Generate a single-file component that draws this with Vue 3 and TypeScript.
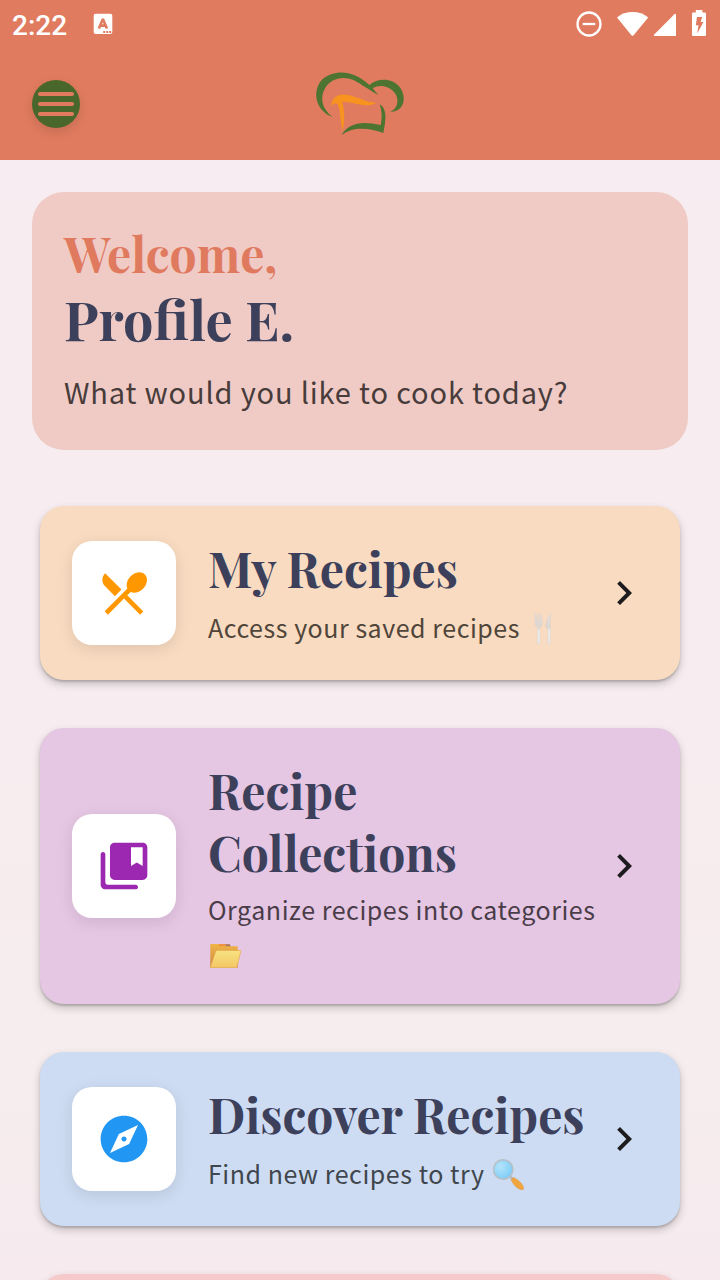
<script setup lang="ts">
interface RecipeCard {
  id: string
  title: string
  subtitle: string
  icon: string
}

const cards: RecipeCard[] = [
  {
    id: 'mine',
    title: 'My Recipes',
    subtitle: 'Access your saved recipes',
    icon: 'M8.1 13.34l2.83-2.83L3.91 3.5c-1.56 1.56-1.56 4.09 0 5.66l4.19 4.18zm6.78-1.81c1.53.71 3.68.21 5.27-1.38 1.91-1.91 2.28-4.65.81-6.12-1.46-1.46-4.2-1.1-6.12.81-1.59 1.59-2.09 3.74-1.38 5.27L3.7 19.87l1.41 1.41L12 14.41l6.88 6.88 1.41-1.41L13.41 13l1.47-1.47z',
  },
  {
    id: 'collections',
    title: 'Recipe Collections',
    subtitle: 'Organize recipes into categories',
    icon: 'M3 6c-.55 0-1 .45-1 1v13c0 1.1.9 2 2 2h13c.55 0 1-.45 1-1s-.45-1-1-1H5c-.55 0-1-.45-1-1V7c0-.55-.45-1-1-1zm17-4H8c-1.1 0-2 .9-2 2v12c0 1.1.9 2 2 2h12c1.1 0 2-.9 2-2V4c0-1.1-.9-2-2-2zm0 10l-2.5-1.5L15 12V4h5v8z',
  },
  {
    id: 'discover',
    title: 'Discover Recipes',
    subtitle: 'Find new recipes to try',
    icon: 'M12 10.9c-.61 0-1.1.49-1.1 1.1s.49 1.1 1.1 1.1c.61 0 1.1-.49 1.1-1.1s-.49-1.1-1.1-1.1zM12 2C6.48 2 2 6.48 2 12s4.48 10 10 10 10-4.48 10-10S17.52 2 12 2zm2.19 12.19L6 18l3.81-8.19L18 6l-3.81 8.19z',
  },
]
</script>

<template>
  <div class="screen">
    <header class="top">
      <div class="status">
        <span class="time">2:22</span>
        <svg class="keyboard" width="20" height="22" viewBox="0 0 20 22">
          <rect x="0.7" y="0.7" width="18.6" height="20.4" rx="2" fill="#fff" />
          <path d="M5.900 15.500L9.900 6L13.900 15.500M7.200 12.600H12.600" fill="none" stroke="#e07b5f" stroke-width="2.6" stroke-linejoin="bevel" />
          <path d="M10.200 19h2M13.200 19h2M16.200 19h2" stroke="#e07b5f" stroke-width="1.8" />
        </svg>
        <svg class="system" width="132" height="30" viewBox="576 8 132 30">
          <circle cx="589" cy="24" r="11.5" fill="none" stroke="#fff" stroke-width="2.3" />
          <path d="M582.7 24h12.6" stroke="#fff" stroke-width="2.3" />
          <path d="M617 17.4C625.5 10.200 639.500 10.200 648.200 17.400L633.600 35.200Q632.500 36.400 631.400 35.200Z" fill="#fff" />
          <path d="M676 14.500V36H654.500Q653.200 35.600 654.200 34.400L674.400 14.200Q675.600 13.400 676 14.500Z" fill="#fff" />
          <path d="M695.800 10h6.600v2.600h2.400q1.200 0 1.200 1.200V35q0 1-1.200 1H693.200q-1.200 0-1.200-1V13.800q0-1.200 1.200-1.200h2.600z" fill="#fff" />
          <path d="M697 17h5.200l-1.600 5h2.800l-6.200 11.500 1.300-8.300h-2.700z" fill="#e07b5f" />
        </svg>
      </div>
      <div class="toolbar">
        <button class="menu" aria-label="Menu"><i /><i /><i /></button>
        <svg class="logo" width="120" height="90" viewBox="0 -3 360 270">
          <path fill="#4d7431" d="M98 171C47 153 33 93 68 57C104 28 160 29 208 75C232 54 276 52 299 81C322 112 313 156 270 156C300 143 298 106 275 89C257 76 236 75 218 85L235 105C206 89 186 74 162 61C128 46 94 55 76 83C58 113 66 147 98 171Z" />
          <path fill="#f7931e" d="M93 140C95 111 115 99 145 105C177 112 196 127 229 128C200 146 171 127 127 125C134 152 135 184 128 212C119 180 123 151 112 131C105 127 99 131 93 140Z" />
          <path fill="#4d7431" d="M124 226C146 189 182 182 242 195C247 173 246 155 239 133C261 145 259 177 250 219C210 204 159 197 124 226Z" />
        </svg>
      </div>
    </header>

    <main class="content">
      <section class="welcome">
        <div class="hello">Welcome,</div>
        <div class="name">Profile E.</div>
        <p class="question">What would you like to cook today?</p>
      </section>

      <article v-for="card in cards" :key="card.id" class="card" :class="card.id">
        <div class="tile">
          <svg width="56" height="56" viewBox="0 0 24 24"><path :d="card.icon" fill="currentColor" /></svg>
        </div>
        <div class="copy">
          <h2>{{ card.title }}</h2>
          <p class="sub">
            {{ card.subtitle }}
            <svg v-if="card.id === 'mine'" class="emoji" width="35" height="31" viewBox="0 0 35 31" role="img" aria-label="🍴">
              <defs>
                <linearGradient id="silver" x1="0" y1="0" x2="0" y2="1">
                  <stop offset="0" stop-color="#e6dfda" />
                  <stop offset="0.45" stop-color="#dcd5d0" />
                  <stop offset="0.6" stop-color="#eeebe9" />
                  <stop offset="1" stop-color="#e9e4e1" />
                </linearGradient>
              </defs>
              <path d="M9.300 .6h.7l.9 8h.5l.4-8h1l.5 8h.5l.9-8h.7l.9 9.500q0 3.500-2.400 4.300l.5 16.100h-3.400l.5-16.100q-2.600-.8-2.600-4.300z" fill="url(#silver)" stroke="#d5ccc5" stroke-width="0.25" />
              <path d="M24.500.5V30.500H21.400L22 16.500Q19.400 15.500 19.600 12.500Q20.500 5 24.500.5Z" fill="url(#silver)" stroke="#d5ccc5" stroke-width="0.3" />
            </svg>
            <svg v-else-if="card.id === 'collections'" class="emoji" width="35" height="31" viewBox="0 0 35 31" role="img" aria-label="📂">
              <defs>
                <linearGradient id="folderBack" x1="0" y1="0" x2="0" y2="1">
                  <stop offset="0" stop-color="#f0b545" />
                  <stop offset="1" stop-color="#cf8347" />
                </linearGradient>
                <linearGradient id="folderFront" x1="0" y1="0" x2="0" y2="1">
                  <stop offset="0" stop-color="#f7e281" />
                  <stop offset="1" stop-color="#f4c765" />
                </linearGradient>
              </defs>
              <path d="M2.300 7.500q0-.5.5-.5H21l1.500 2.300H29q.8 0 .8.8V30.500H2.300z" fill="url(#folderBack)" />
              <path d="M11 7.200h6v1.900h-6z" fill="#ef8d3f" />
              <path d="M17 7.200h4.800l1 2.100H18z" fill="#a9766b" />
              <path d="M7.800 14.300q.3-.8 1.100-.8H32q1 0 .8.900L28.900 29.900q-.2.800-1 .8H3.200q-1 0-.7-.9z" fill="url(#folderFront)" stroke="#e5ac50" stroke-width="0.7" />
            </svg>
            <svg v-else class="emoji" width="35" height="31" viewBox="0 0 35 31" role="img" aria-label="🔍">
              <defs>
                <radialGradient id="lens" cx="0.35" cy="0.35" r="0.75">
                  <stop offset="0" stop-color="#b4e4fb" />
                  <stop offset="1" stop-color="#79cbf7" />
                </radialGradient>
              </defs>
              <path d="M19 17.500l3 3" stroke="#b6babd" stroke-width="3" />
              <path d="M20.200 21.200Q21.500 18.600 23.500 18.900Q31.500 23.500 32.700 29Q32.800 31 30.500 30.800Q24.500 29.500 20.200 21.200Z" fill="#f2a640" stroke="#dc9139" stroke-width="0.5" />
              <circle cx="12.200" cy="10.500" r="9.700" fill="url(#lens)" stroke="#b8bfc5" stroke-width="1.500" />
            </svg>
          </p>
        </div>
        <svg class="chevron" width="48" height="48" viewBox="0 0 24 24">
          <path d="M8.59 16.59L13.17 12 8.59 7.41 10 6l6 6-6 6z" fill="#1d1b1e" />
        </svg>
      </article>
      <article class="card next" />
    </main>
  </div>
</template>

<style>
html,
body {
  margin: 0;
  overflow: hidden;
}
</style>

<style scoped>
.screen {
  width: 720px;
  height: 1280px;
  overflow: hidden;
  display: flex;
  flex-direction: column;
  background: linear-gradient(#f7ecf1, #f7ecef 55%, #f6edee 85%, #f6eaee);
  font-family: "Noto Sans CJK SC", "Open Sans", sans-serif;
}

.top {
  flex: none;
  height: 160px;
  background: #e07b5f;
}

.status {
  display: flex;
  align-items: center;
  height: 48px;
  padding: 0 12px;
  box-sizing: border-box;
}

.time {
  width: 81px;
  padding-top: 3px;
  color: #fff;
  font: 500 28px/32px Roboto, sans-serif;
}

.system {
  margin: -2px 0 0 auto;
}

.toolbar {
  display: grid;
  grid-template-columns: 48px 1fr 48px;
  align-items: center;
  justify-items: center;
  height: 112px;
  padding: 0 32px;
}

.menu {
  display: flex;
  flex-direction: column;
  align-items: center;
  justify-content: center;
  gap: 6px;
  width: 48px;
  height: 48px;
  padding: 0;
  border: 0;
  border-radius: 50%;
  background: #4a672b;
  box-shadow: 0 4px 12px rgba(0, 0, 0, 0.12);
}

.menu i {
  width: 36px;
  height: 4px;
  border-radius: 2px;
  background: #e07b5f;
}

.content {
  display: flex;
  flex-direction: column;
  gap: 48px;
  padding: 32px 40px 0;
}

.welcome {
  height: 258px;
  margin: 0 -8px 8px;
  padding: 30px 32px 32px;
  box-sizing: border-box;
  border-radius: 32px;
  background: #f0cbc6;
  white-space: nowrap;
}

.hello,
.name,
h2 {
  font-family: "Playfair Display", "Liberation Serif", serif;
  font-weight: 700;
}

.hello {
  color: #e07a5f;
  font-size: 48px;
  line-height: 62px;
}

.name {
  color: #3d405b;
  font-size: 54px;
  line-height: 70px;
}

.question {
  margin: 13px 0 0;
  color: #483c3b;
  font-size: 29px;
  line-height: 48px;
  letter-spacing: 0.84px;
}

.card {
  display: flex;
  align-items: center;
  flex: none;
  padding: 32px;
  border-radius: 24px;
  box-shadow: 0 2px 2px rgba(0, 0, 0, 0.16), 0 4px 8px rgba(0, 0, 0, 0.2);
}

.tile {
  display: grid;
  place-items: center;
  flex: none;
  width: 104px;
  height: 104px;
  margin-right: 32px;
  border-radius: 20px;
  background: #fff;
  box-shadow: 0 4px 16px rgba(0, 0, 0, 0.1);
}

.copy {
  flex: 1;
  min-width: 0;
}

h2 {
  margin: -1px 0 6px;
  color: #3d405b;
  font-size: 48px;
  line-height: 62px;
}

.sub {
  margin: 0;
  padding-bottom: 1px;
  font-size: 25px;
  line-height: 40px;
  letter-spacing: 0.54px;
}

.emoji {
  margin-top: 8px;
  vertical-align: -6px;
}

.chevron {
  flex: none;
}

.mine {
  background: #f8dbc0;
}
.mine .tile {
  color: #ff9800;
}
.mine .sub {
  color: #50453a;
}

.collections {
  background: #e5c6e3;
}
.collections .tile {
  color: #9c27b0;
}
.collections .sub {
  color: #4a3d49;
}

.discover {
  background: #cddcf2;
}
.discover .tile {
  color: #2196f3;
}
.discover .sub {
  color: #40464d;
}

.next {
  height: 110px;
  background: #f6caca;
}
</style>
